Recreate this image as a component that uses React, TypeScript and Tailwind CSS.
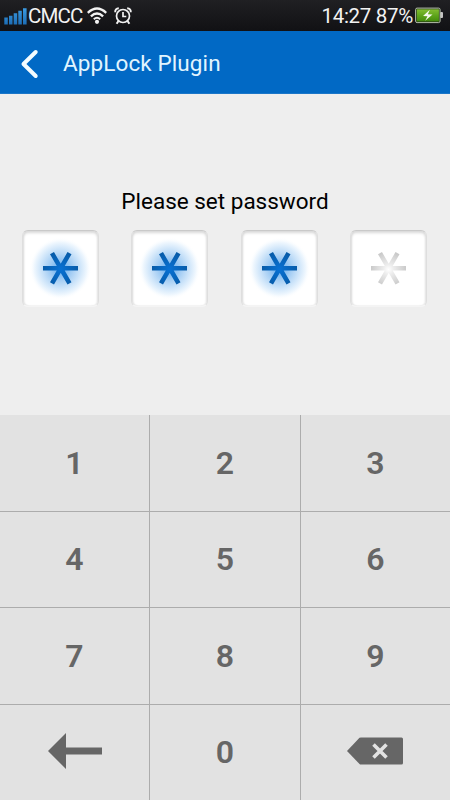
const slots = [true, true, true, false]
const digits = ['1', '2', '3', '4', '5', '6', '7', '8', '9']

const SignalIcon = () => (
  <svg width="24" height="18" viewBox="0 0 24 18" className="shrink-0">
    <defs>
      <linearGradient id="signal" gradientUnits="userSpaceOnUse" x1="0" y1="0" x2="0" y2="18">
        <stop offset="0" stopColor="#3d9ee6" />
        <stop offset="1" stopColor="#1c6cb4" />
      </linearGradient>
    </defs>
    <path
      fill="url(#signal)"
      d="M.3 10.500h3.500v7H.3zM5 8.700h3.500v8.800H5zM9.700 6.200h3.500v11.300H9.700zM14.300 3.800h3.500v13.700h-3.500zM19 1.200h3.600v16.300H19z"
    />
  </svg>
)

const WifiIcon = () => (
  <svg width="20" height="17" viewBox="0 0 20 17" fill="none" stroke="#f2f2f2" strokeWidth="2.400" className="shrink-0">
    <path d="M.8 5.800Q10-2.600 19.200 5.800" />
    <path d="M3.900 9.300Q10 3.700 16.100 9.300" />
    <path d="M6.800 12.300Q10 9.200 13.200 12.300" strokeWidth="2" />
    <circle cx="10" cy="14.800" r="2.100" fill="#f2f2f2" stroke="none" />
  </svg>
)

const AlarmIcon = () => (
  <svg width="18" height="18" viewBox="0 0 18 18" fill="none" stroke="#f2f2f2" strokeWidth="1.700" className="shrink-0">
    <circle cx="9" cy="9" r="6.500" />
    <path d="M9 5v4.500h3.300" />
    <path d="M1.200 5.200Q1 1.500 4.800 1.300M16.800 5.200Q17 1.500 13.200 1.300" strokeWidth="1.900" />
    <path d="M4.500 14 2.600 16.800M13.500 14l1.900 2.800" strokeWidth="2" />
  </svg>
)

const BatteryIcon = () => (
  <svg width="29" height="17" viewBox="0 0 29 17" className="shrink-0">
    <defs>
      <linearGradient id="battery" x1="0" y1="0" x2="0" y2="1">
        <stop offset="0" stopColor="#83bd32" />
        <stop offset=".5" stopColor="#5fa51b" />
        <stop offset="1" stopColor="#438b0c" />
      </linearGradient>
    </defs>
    <rect x="25" y="5" width="3" height="6" rx="1" fill="#c4c4c4" />
    <rect x=".6" y="1.100" width="24.500" height="14.500" rx="1.500" fill="#253914" stroke="#b5beac" strokeWidth="1" />
    <rect x="1.800" y="2.300" width="22.100" height="12.100" fill="url(#battery)" />
    <path d="M14.800 2.800 8 9.100l4.500.2-2.300 4.500 7.300-6.300-4.600-.2z" fill="#f4f8ed" />
  </svg>
)

const StatusBar = () => (
  <div className="h-[31px] pl-1 pr-[6px] flex items-center justify-between bg-linear-to-b from-[#202023] to-[#111114] text-[#f2f2f2] text-[20.5px]">
    <div className="flex items-center">
      <SignalIcon />
      <div className="w-[54px] pt-px tracking-[-0.9px] whitespace-nowrap">CMCC</div>
      <div className="flex items-center gap-[7px] ml-[5px]">
        <WifiIcon />
        <AlarmIcon />
      </div>
    </div>
    <div className="flex items-center gap-[2px]">
      <div className="pt-px tracking-[-0.3px] whitespace-nowrap">14:27 87%</div>
      <BatteryIcon />
    </div>
  </div>
)

const Header = () => (
  <div className="h-[63px] pl-5 flex items-center bg-[#0169c5] border-b border-[#1b76c8] text-[#e1f5ff]">
    <svg width="20" height="32" viewBox="0 0 20 32" fill="none" className="mt-[3px]">
      <path d="M15.700 4 3.500 16 15.700 28" stroke="#f4fcff" strokeWidth="4" strokeLinecap="round" strokeLinejoin="round" />
    </svg>
    <div className="ml-[23px] mt-[4px] text-[22.5px] tracking-[0.1px]">AppLock Plugin</div>
  </div>
)

const arms = 'M0 16.300h35M9 1.200l17.500 30.200M26.500 1.200 9 31.400'

const Slot = ({ filled }: { filled: boolean }) => (
  <div className="size-[77px] rounded-[6px] bg-white border border-[#dedede] border-t-[#c9c9c9] border-b-[#f4f4f4] shadow-[inset_0_2px_3px_#d8d8d8,inset_1px_0_2px_#e2e2e2,inset_-1px_0_2px_#eeeeee]">
    <svg width="75" height="75" viewBox="0 0 75 75">
      <defs>
        <radialGradient id="glow">
          <stop offset="0" stopColor="#5ea9ee" />
          <stop offset=".35" stopColor="#a0cbf3" />
          <stop offset=".65" stopColor="#d0e6fa" />
          <stop offset=".85" stopColor="#eff7fe" />
          <stop offset="1" stopColor="#ffffff" stopOpacity="0" />
        </radialGradient>
        <radialGradient id="blue" gradientUnits="userSpaceOnUse" cx="17.500" cy="17.500" r="18">
          <stop offset="0" stopColor="#0871d4" />
          <stop offset="1" stopColor="#075ba8" />
        </radialGradient>
        <radialGradient id="grey" gradientUnits="userSpaceOnUse" cx="17.500" cy="17.500" r="18">
          <stop offset="0" stopColor="#ffffff" />
          <stop offset=".3" stopColor="#ececec" />
          <stop offset="1" stopColor="#c9c9c9" />
        </radialGradient>
      </defs>
      {filled ? <circle cx="37.500" cy="37.500" r="31" fill="url(#glow)" /> : null}
      <g transform="translate(20 21)" fill="none" strokeWidth="4.600">
        <path d={arms} stroke={filled ? 'url(#blue)' : 'url(#grey)'} />
      </g>
    </svg>
  </div>
)

const ArrowIcon = () => (
  <svg width="54" height="36" viewBox="0 0 54 36" fill="#666666" className="-mt-[2px]">
    <path d="M0 18 18 0v14.500h36v7H18V36z" />
  </svg>
)

const DeleteIcon = () => (
  <svg width="56" height="28" viewBox="0 0 56 28" className="-mt-[2px] mr-[2px]">
    <path d="M0 14 12.500.8Q13 .5 14 .5h40.500Q56 .5 56 2v24q0 1.500-1.500 1.500H14q-1 0-1.500-.5z" fill="#666666" />
    <path d="m26.500 7.500 13 13M39.500 7.500l-13 13" stroke="#e2e2e2" strokeWidth="3.600" />
  </svg>
)

const Keypad = () => (
  <div className="h-[385px] grid grid-cols-[149px_150px_149px] grid-rows-[95.500px_95.500px_95.500px_95.500px] gap-px bg-[#acacac] text-[#666666] text-[32px] font-semibold">
    {digits.map((digit) => (
      <button key={digit} className="flex items-center justify-center bg-[#e2e2e2]">
        {digit}
      </button>
    ))}
    <button aria-label="Back" className="flex items-center justify-center bg-[#e2e2e2]">
      <ArrowIcon />
    </button>
    <button className="flex items-center justify-center bg-[#e2e2e2]">0</button>
    <button aria-label="Delete" className="flex items-center justify-center bg-[#e2e2e2]">
      <DeleteIcon />
    </button>
  </div>
)

export default function App() {
  return (
    <div className="w-[450px] h-[800px] flex flex-col overflow-hidden bg-[#eeeeee] font-[Roboto,sans-serif]">
      <StatusBar />
      <Header />
      <div className="h-[321px] pt-[91px]">
        <div className="text-center text-[22.5px] leading-[32px] text-black">Please set password</div>
        <div className="mt-[13px] pl-[22px] pr-[23px] flex justify-between">
          {slots.map((filled, i) => (
            <Slot key={i} filled={filled} />
          ))}
        </div>
      </div>
      <Keypad />
    </div>
  )
}
